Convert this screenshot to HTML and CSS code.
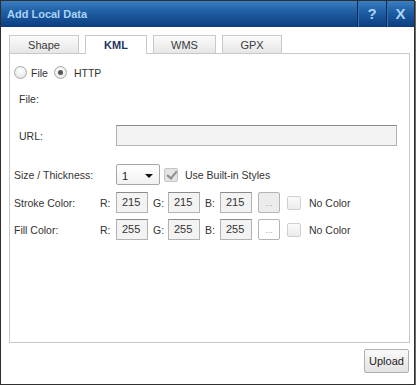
FILE: index.html
```html
<!DOCTYPE html>
<html>
<head>
<link rel="stylesheet" href="styles.css">
</head>
<body>
<div class="window">
    <div class="titlebar">
        <div class="title">Add Local Data</div>
        <div class="tb-btn help">?</div>
        <div class="tb-btn close">X</div>
    </div>

    <div class="tabs">
        <div class="tab tab-shape">Shape</div>
        <div class="tab tab-kml active">KML</div>
        <div class="tab tab-wms">WMS</div>
        <div class="tab tab-gpx">GPX</div>
    </div>

    <div class="panel">
        <div class="row radio-row">
            <span class="radio"></span>
            <span class="radio-label">File</span>
            <span class="radio checked"></span>
            <span class="radio-label http">HTTP</span>
        </div>

        <div class="row file-row">
            <span class="label indent">File:</span>
        </div>

        <div class="row url-row">
            <span class="label indent label-wide">URL:</span>
            <div class="textbox url"></div>
        </div>

        <div class="row size-row">
            <span class="label label-wide">Size / Thickness:</span>
            <div class="select">
                <span>1</span>
                <span class="arrow"></span>
            </div>
            <span class="check checked"></span>
            <span class="check-label">Use Built-in Styles</span>
        </div>

        <div class="row color-row stroke-row">
            <span class="label label-color">Stroke Color:</span>
            <span class="ch">R:</span>
            <div class="textbox num">215</div>
            <span class="ch">G:</span>
            <div class="textbox num">215</div>
            <span class="ch">B:</span>
            <div class="textbox num">215</div>
            <div class="pick disabled">...</div>
            <span class="check"></span>
            <span class="check-label">No Color</span>
        </div>

        <div class="row color-row fill-row">
            <span class="label label-color">Fill Color:</span>
            <span class="ch">R:</span>
            <div class="textbox num">255</div>
            <span class="ch">G:</span>
            <div class="textbox num">255</div>
            <span class="ch">B:</span>
            <div class="textbox num">255</div>
            <div class="pick">...</div>
            <span class="check"></span>
            <span class="check-label">No Color</span>
        </div>
    </div>

    <div class="footer">
        <button class="upload">Upload</button>
    </div>
</div>
</body>
</html>
```

FILE: styles.css
```css
* {
    margin: 0;
    padding: 0;
    box-sizing: border-box;
    font-family: "Liberation Sans", Arial, sans-serif;
}

body {
    background: #fff;
}

.window {
    width: 415px;
    height: 385px;
    border: 1px solid #2e2e2e;
    box-shadow: 1px 1px 0 #6a6a6a;
    background: #fff;
    display: flex;
    flex-direction: column;
}

.titlebar {
    height: 26px;
    display: flex;
    align-items: stretch;
    background: linear-gradient(to bottom, #3b80c2 0%, #1f5fa4 40%, #0c3e80 100%);
}

.title {
    flex: 1;
    padding-left: 6px;
    line-height: 26px;
    font-size: 11px;
    font-weight: bold;
    color: #a9d3f6;
}

.tb-btn {
    width: 28px;
    text-align: center;
    line-height: 26px;
    font-size: 15px;
    font-weight: bold;
    color: #a9d3f6;
    border-left: 1px solid #0a2b5a;
    box-shadow: inset 1px 0 0 #3571ae;
}

.help {
    width: 29px;
}

.tabs {
    display: flex;
    gap: 6px;
    margin: 8px 0 0 8px;
    height: 18px;
    position: relative;
    z-index: 1;
}

.tab {
    height: 18px;
    border: 1px solid #c9c9c9;
    border-bottom: none;
    background: linear-gradient(to bottom, #fbfbfb, #e6e6e6);
    font-size: 11px;
    color: #3a3a3a;
    text-align: center;
    line-height: 18px;
}

.tab-shape { width: 70px; }
.tab-kml { width: 62px; }
.tab-wms { width: 63px; }
.tab-gpx { width: 60px; }

.tab.active {
    background: #fff;
    height: 19px;
    font-weight: bold;
    color: #1f3561;
}

.panel {
    margin-left: 8px;
    width: 401px;
    height: 290px;
    border: 1px solid #c9c9c9;
    padding: 8px 0 0 4px;
}

.row {
    display: flex;
    align-items: center;
    height: 21px;
    font-size: 10.5px;
    color: #333;
}

.radio {
    width: 13px;
    height: 13px;
    border-radius: 50%;
    border: 1px solid #a9a9a9;
    background: radial-gradient(circle at 50% 35%, #ffffff 0%, #e9e9e9 70%, #d5d5d5 100%);
    display: flex;
    align-items: center;
    justify-content: center;
}

.radio.checked::after {
    content: "";
    width: 5px;
    height: 5px;
    border-radius: 50%;
    background: #555;
}

.radio-label {
    margin: 0 6px 0 4px;
}

.radio-label.http {
    margin-left: 7px;
}

.file-row {
    margin-top: 5px;
}

.indent {
    padding-left: 5px;
}

.label-wide {
    width: 102px;
}

.url-row {
    margin-top: 16px;
}

.textbox {
    height: 21px;
    border: 1px solid #b2b2b2;
    border-top-color: #8c8c8c;
    background: #f3f3f3;
    font-size: 11px;
    color: #333;
    line-height: 19px;
    padding-left: 5px;
}

.url {
    width: 281px;
}

.size-row {
    margin-top: 18px;
}

.select {
    width: 44px;
    height: 21px;
    border: 1px solid #a6a6a6;
    border-radius: 2px;
    background: linear-gradient(to bottom, #ffffff, #f1f1f1);
    display: flex;
    align-items: center;
    justify-content: space-between;
    padding: 2px 6px 0 5px;
    font-size: 11px;
    color: #222;
}

.arrow {
    width: 0;
    height: 0;
    border-left: 4px solid transparent;
    border-right: 4px solid transparent;
    border-top: 4px solid #111;
}

.check {
    width: 14px;
    height: 14px;
    border: 1px solid #cfcfcf;
    border-radius: 2px;
    background: linear-gradient(to bottom, #fbfbfb, #ececec);
    position: relative;
}

.size-row .check {
    margin-left: 4px;
}

.check.checked {
    background: #e4e4e4;
    border-color: #c4c4c4;
}

.check.checked::after {
    content: "";
    position: absolute;
    left: 4px;
    top: 0;
    width: 4px;
    height: 8px;
    border-right: 2px solid #8d8d8d;
    border-bottom: 2px solid #8d8d8d;
    transform: rotate(40deg);
}

.check-label {
    margin-left: 7px;
}

.color-row .check {
    margin-left: 7px;
}

.color-row .check-label {
    margin-left: 8px;
}

.stroke-row {
    margin-top: 7px;
}

.fill-row {
    margin-top: 6px;
}

.label-color {
    width: 86px;
}

.ch {
    width: 16px;
}

.num + .ch {
    width: 15px;
    margin-left: 5px;
}

.num {
    width: 32px;
}

.pick {
    width: 22px;
    height: 21px;
    border: 1px solid #b5b5b5;
    border-radius: 2px;
    background: #fff;
    color: #aaa;
    font-size: 9px;
    text-align: center;
    line-height: 20px;
    margin-left: 6px;
}

.pick.disabled {
    background: #ececec;
}

.footer {
    display: flex;
    justify-content: flex-end;
    padding: 6px 5px 0 0;
}

.upload {
    width: 45px;
    height: 24px;
    border: 1px solid #b0b0b0;
    border-radius: 2px;
    background: linear-gradient(to bottom, #fafafa, #e2e2e2);
    font-size: 11px;
    color: #222;
}
```
